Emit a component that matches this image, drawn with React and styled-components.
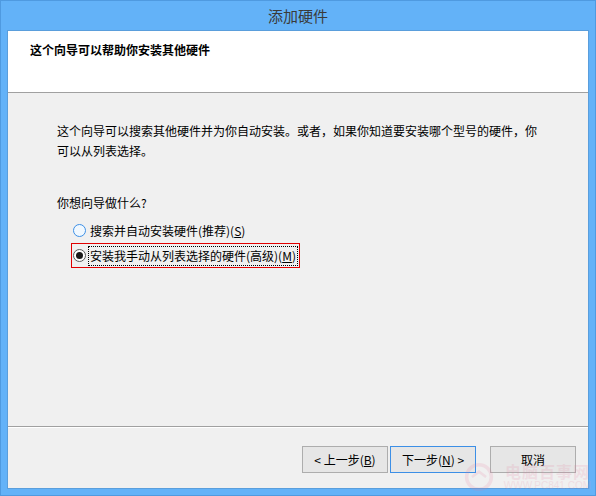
import React from "react";
import styled, { createGlobalStyle } from "styled-components";

const Global = createGlobalStyle`
  html, body { margin: 0; padding: 0; background: #62b0f6; }
  body { font-family: "Noto Sans CJK SC", "Noto Sans", sans-serif; }
  * { box-sizing: border-box; }
`;

const Window = styled.div`
  position: relative;
  width: 596px;
  height: 496px;
  background: #63b2f8;
  border: 1px solid #4f9ae0;
  padding: 0 6px 6px 6px;
  display: flex;
  flex-direction: column;
  overflow: hidden;
`;

const TitleBar = styled.div`
  height: 29px;
  display: flex;
  align-items: center;
  justify-content: center;
  font-size: 15px;
  color: #3a3a3a;
  padding-bottom: 1px;
`;

const Panel = styled.div`
  flex: 1;
  border: 1px solid #5a9edc;
  background: #f0f0f0;
  display: flex;
  flex-direction: column;
`;

const Header = styled.div`
  height: 62px;
  background: #fff;
  border-bottom: 1px solid #a0a0a0;
  padding: 11px 0 0 22px;
  font-size: 12px;
  font-weight: bold;
  color: #000;
  line-height: 16px;
`;

const Body = styled.div`
  flex: 1;
  padding: 28px 20px 0 49px;
  color: #000;
  font-size: 12px;
`;

const Paragraph = styled.p`
  margin: 0;
  line-height: 20px;
  white-space: nowrap;
`;

const Question = styled.p`
  margin: 32px 0 5px 0;
  line-height: 20px;
`;

const RadioList = styled.div`
  margin-left: 14px;
  display: flex;
  flex-direction: column;
`;

const RadioRow = styled.label`
  display: flex;
  align-items: center;
  width: 229px;
  height: 25px;
  padding: 0 1px;
  border: 1px solid ${(p) => (p.$highlight ? "#e00000" : "transparent")};
`;

const Circle = styled.span`
  width: 13px;
  height: 13px;
  border-radius: 50%;
  border: 1px solid ${(p) => (p.$hover ? "#3c8fe6" : "#5a5a5a")};
  background: ${(p) => (p.$hover ? "#f0f8ff" : "#fff")};
  display: flex;
  align-items: center;
  justify-content: center;
  margin-right: 3px;
  flex-shrink: 0;
`;

const Dot = styled.span`
  width: 7px;
  height: 7px;
  border-radius: 50%;
  background: #1a1a1a;
`;

const RadioText = styled.span`
  line-height: 18px;
  padding: 0 1px;
  outline: ${(p) => (p.$focus ? "1px dotted #000" : "none")};
  white-space: nowrap;
`;

const Footer = styled.div`
  height: 62px;
  border-top: 1px solid #a0a0a0;
  box-shadow: inset 0 1px 0 #fff;
  display: flex;
  align-items: flex-start;
  justify-content: flex-end;
  padding: 19px 12px 0 0;
`;

const Button = styled.button`
  width: 86px;
  height: 27px;
  margin-left: ${(p) => p.$gap || 0}px;
  background: #e6e6e6;
  border: 1px solid ${(p) => (p.$focused ? "#3c8fe6" : "#adadad")};
  font-family: "Noto Sans CJK SC", "Noto Sans", sans-serif;
  font-size: 12px;
  color: #000;
  padding: 0;
  display: flex;
  align-items: center;
  justify-content: center;
`;

const U = styled.span`
  text-decoration: underline;
`;

const Watermark = styled.div`
  position: absolute;
  right: 4px;
  bottom: 3px;
  display: flex;
  align-items: center;
  gap: 10px;
  opacity: 0.16;
  pointer-events: none;
  color: #e47b9b;
`;

const WmText = styled.div`
  display: flex;
  flex-direction: column;
  align-items: center;
`;

const WmTitle = styled.span`
  font-size: 16px;
  line-height: 18px;
  font-weight: bold;
  letter-spacing: 1px;
`;

const WmUrl = styled.span`
  font-family: "Liberation Sans", sans-serif;
  font-size: 10px;
  line-height: 12px;
`;

export default function App() {
  return (
    <>
      <Global />
      <Window>
        <TitleBar>添加硬件</TitleBar>
        <Panel>
          <Header>这个向导可以帮助你安装其他硬件</Header>
          <Body>
            <Paragraph>
              这个向导可以搜索其他硬件并为你自动安装。或者，如果你知道要安装哪个型号的硬件，你
              <br />
              可以从列表选择。
            </Paragraph>
            <Question>你想向导做什么?</Question>
            <RadioList>
              <RadioRow>
                <Circle $hover />
                <RadioText>
                  搜索并自动安装硬件(推荐)(<U>S</U>)
                </RadioText>
              </RadioRow>
              <RadioRow $highlight>
                <Circle>
                  <Dot />
                </Circle>
                <RadioText $focus>
                  安装我手动从列表选择的硬件(高级)(<U>M</U>)
                </RadioText>
              </RadioRow>
            </RadioList>
          </Body>
          <Footer>
            <Button>
              &lt; 上一步(<U>B</U>)
            </Button>
            <Button $gap={2} $focused>
              下一步(<U>N</U>) &gt;
            </Button>
            <Button $gap={14}>取消</Button>
          </Footer>
        </Panel>
        <Watermark>
          <svg width="30" height="30" viewBox="0 0 34 34">
            <circle cx="17" cy="17" r="14" fill="none" stroke="#e47b9b" strokeWidth="4" />
            <path d="M9 17 L17 11 L25 17" fill="none" stroke="#e47b9b" strokeWidth="3" />
          </svg>
          <WmText>
            <WmTitle>电脑百事网</WmTitle>
            <WmUrl>WWW.PC841.COM</WmUrl>
          </WmText>
        </Watermark>
      </Window>
    </>
  );
}
